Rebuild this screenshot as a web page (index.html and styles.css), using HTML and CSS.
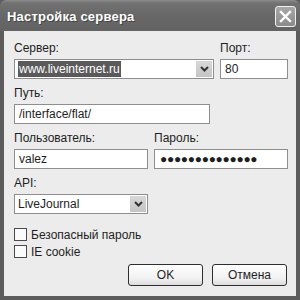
FILE: index.html
```html
<!DOCTYPE html>
<html lang="ru">
<head>
    <meta charset="UTF-8">
    <title>Настройка сервера</title>
    <link rel="stylesheet" href="styles.css">
</head>
<body>
    <div class="window">
        <div class="titlebar">
            <span class="title">Настройка сервера</span>
            <div class="closeButton">
                <svg width="13" height="13" viewBox="0 0 13 13">
                    <path d="M2 2 L11 11 M11 2 L2 11" stroke="#fff" stroke-width="2.4" stroke-linecap="square"/>
                </svg>
            </div>
        </div>

        <div class="content">
            <div class="row twoCols serverRow">
                <div class="field">
                    <label>Сервер:</label>
                    <div class="combo">
                        <span class="comboText"><span class="selected">www.liveinternet.ru</span></span>
                        <span class="comboButton">
                            <svg width="9" height="6" viewBox="0 0 9 6"><path d="M1 1 L4.5 4.5 L8 1" stroke="#333" stroke-width="2" fill="none"/></svg>
                        </span>
                    </div>
                </div>
                <div class="field">
                    <label>Порт:</label>
                    <div class="textBox">80</div>
                </div>
            </div>

            <div class="row">
                <div class="field">
                    <label>Путь:</label>
                    <div class="textBox pathBox">/interface/flat/</div>
                </div>
            </div>

            <div class="row twoCols halfRow">
                <div class="field">
                    <label>Пользователь:</label>
                    <div class="textBox">valez</div>
                </div>
                <div class="field">
                    <label>Пароль:</label>
                    <div class="textBox password">●●●●●●●●●●●●●●</div>
                </div>
            </div>

            <div class="row">
                <div class="field">
                    <label>API:</label>
                    <div class="combo apiCombo">
                        <span class="comboText">LiveJournal</span>
                        <span class="comboButton">
                            <svg width="9" height="6" viewBox="0 0 9 6"><path d="M1 1 L4.5 4.5 L8 1" stroke="#333" stroke-width="2" fill="none"/></svg>
                        </span>
                    </div>
                </div>
            </div>

            <div class="checks">
                <div class="check"><span class="checkBox"></span>Безопасный пароль</div>
                <div class="check"><span class="checkBox"></span>IE cookie</div>
            </div>

            <div class="buttons">
                <div class="button">OK</div>
                <div class="button">Отмена</div>
            </div>
        </div>
    </div>
</body>
</html>
```

FILE: styles.css
```css
body {
    margin: 0;
    font-family: 'Liberation Sans', Arial, sans-serif;
    font-size: 12px;
    color: #1e1e1e;
}

.window {
    width: 300px;
    height: 300px;
    box-sizing: border-box;
    background: #5c5c5c;
    padding: 0 4px 4px;
    display: flex;
    flex-direction: column;
}

.titlebar {
    height: 31px;
    margin: 0 -4px;
    padding: 0 4px 0 7px;
    display: flex;
    align-items: center;
    justify-content: space-between;
    background: linear-gradient(to bottom, #8c8c8c 0px, #727272 3px, #686868 14px, #636363 31px);
    border-radius: 6px 6px 0 0;
}

.title {
    color: #fff;
    font-weight: bold;
    font-size: 13px;
    letter-spacing: 0.2px;
    text-shadow: 1px 1px 0 #444;
    margin-top: 2px;
}

.closeButton {
    width: 19px;
    height: 19px;
    border: 1px solid #f0f0f0;
    border-radius: 3px;
    background: linear-gradient(to bottom, #a8a8a8, #8a8a8a);
    display: flex;
    align-items: center;
    justify-content: center;
    margin-top: 1px;
}

.content {
    flex: 1;
    background: #ececec;
    padding: 10px 8px 0 10px;
}

.row {
    margin-bottom: 7px;
}

.twoCols {
    display: grid;
    gap: 8px;
}

.serverRow {
    grid-template-columns: 1fr 68px;
}

.halfRow {
    grid-template-columns: 1fr 1fr;
    gap: 6px;
}

.field label {
    display: block;
    height: 14px;
    line-height: 14px;
    margin-bottom: 4px;
}

.textBox,
.combo {
    height: 20px;
    box-sizing: border-box;
    border: 1px solid #8e8e8e;
    background: #fff;
    line-height: 18px;
    padding-left: 4px;
    white-space: nowrap;
    overflow: hidden;
}

.pathBox {
    width: 196px;
}

.password {
    font-size: 12px;
    letter-spacing: -0.3px;
    padding-left: 5px;
}

.combo {
    display: flex;
    align-items: center;
    padding: 1px 1px 1px 3px;
    margin-right: -2px;
}

.apiCombo {
    width: 134px;
    margin-right: 0;
}

.comboText {
    flex: 1;
    line-height: 16px;
}

.selected {
    background: #5a5a5a;
    color: #fff;
    padding: 1px 1px;
}

.comboButton {
    width: 16px;
    height: 16px;
    background: linear-gradient(to bottom, #d8d8d8, #c4c4c4);
    display: flex;
    align-items: center;
    justify-content: center;
}

.checks {
    margin-top: 12px;
}

.check {
    display: flex;
    align-items: center;
    height: 17px;
}

.checkBox {
    width: 11px;
    height: 11px;
    border: 1px solid #4a4a4a;
    background: #fbfbfb;
    margin-right: 4px;
}

.buttons {
    display: flex;
    justify-content: flex-end;
    gap: 9px;
    margin-top: 4px;
    padding-right: 1px;
}

.button {
    width: 75px;
    height: 22px;
    box-sizing: border-box;
    border: 1px solid #2e2e2e;
    border-radius: 3px;
    background: linear-gradient(to bottom, #ffffff, #f0f0f0 70%, #dcdcdc);
    display: flex;
    align-items: center;
    justify-content: center;
}
```
